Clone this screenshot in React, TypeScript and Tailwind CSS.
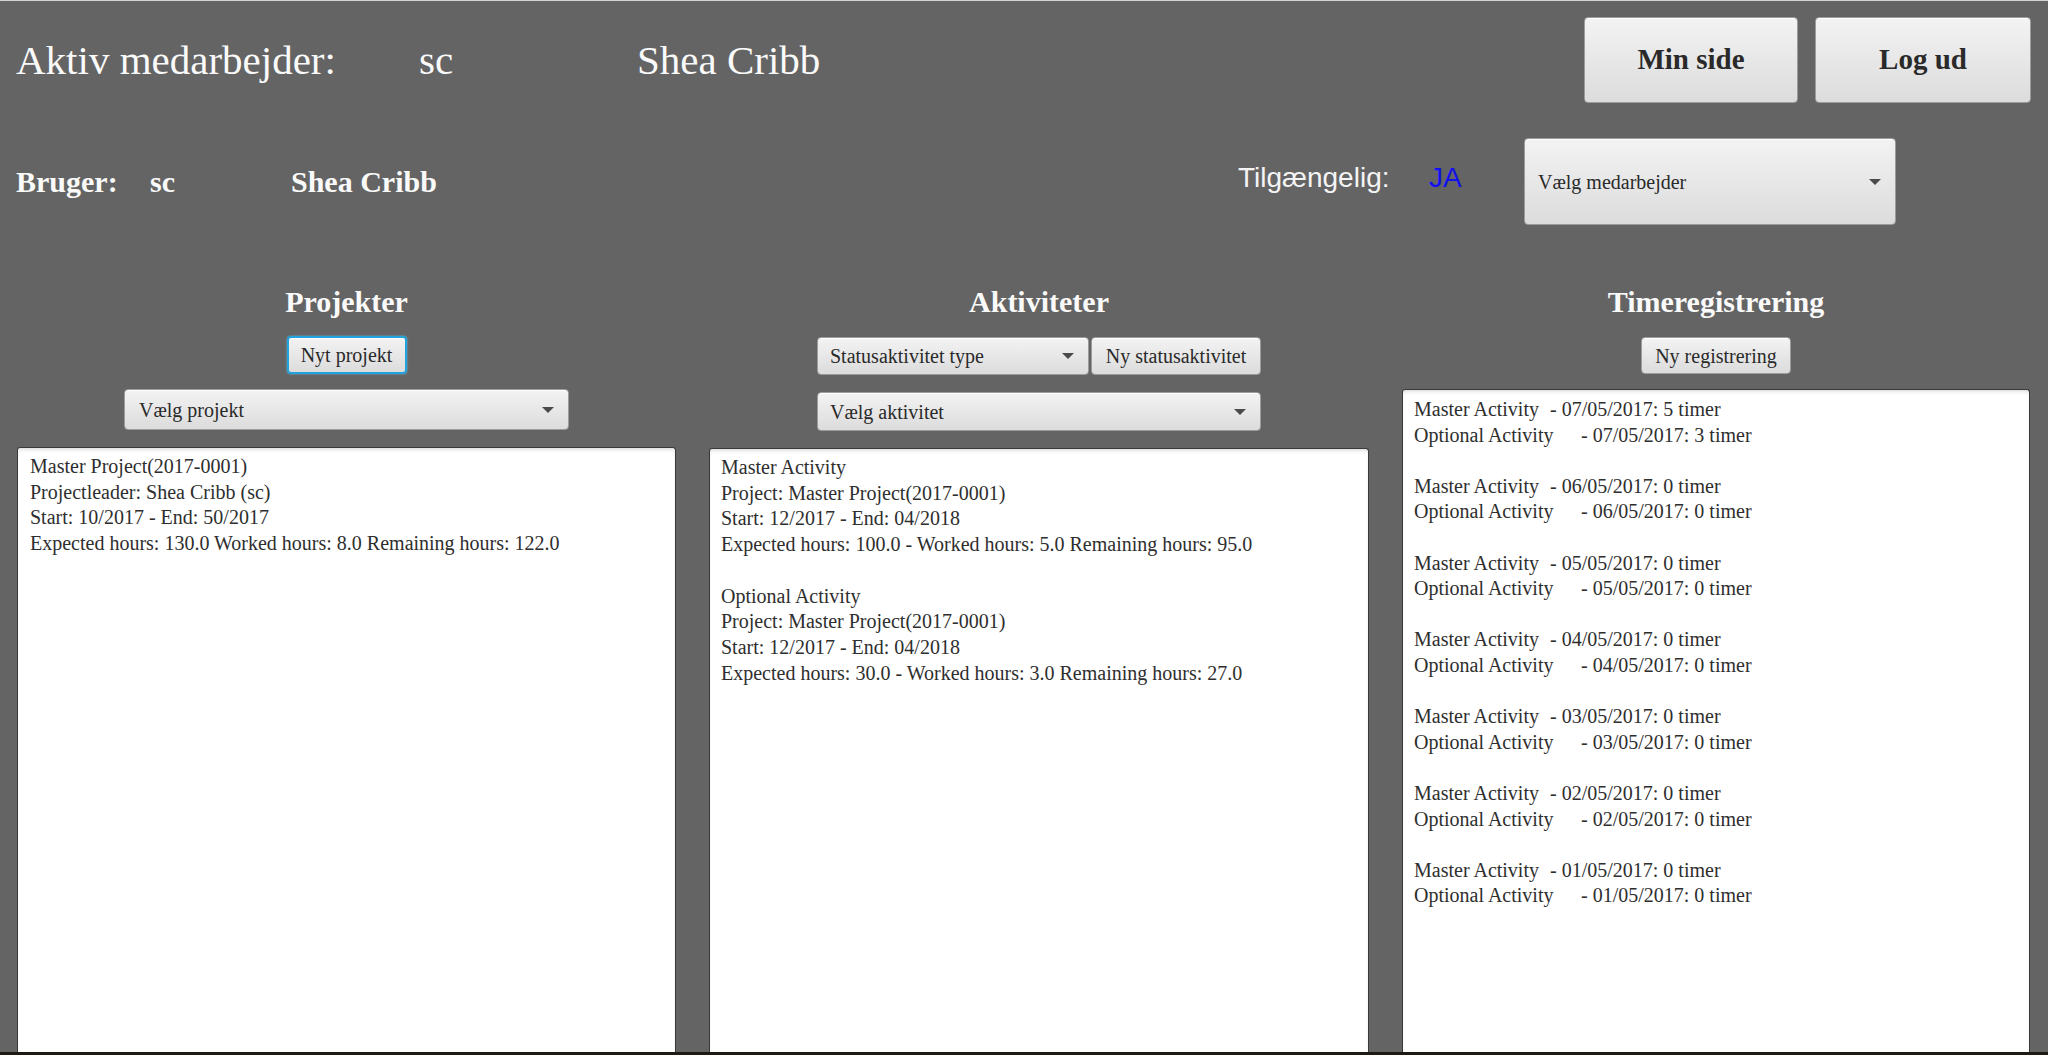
import type { ReactNode } from "react";

const serif = "font-['Liberation_Serif',_'Times_New_Roman',_serif]";

function Caret() {
  return (
    <svg width="12" height="6" viewBox="0 0 12 6" className="shrink-0">
      <path d="M0 0h12L6 6z" fill="#4a4a4a" />
    </svg>
  );
}

function Combo({ label, className }: { label: string; className: string }) {
  return (
    <div
      className={`flex items-center justify-between rounded-[4px] border border-[#9c9c9c] bg-gradient-to-b from-[#f3f3f3] to-[#dcdcdc] shadow-[inset_0_1px_0_#ffffff] text-[20px] text-[#2a2a2a] ${className}`}
    >
      <span>{label}</span>
      <Caret />
    </div>
  );
}

function Btn({ children, className }: { children: ReactNode; className: string }) {
  return (
    <div
      className={`flex items-center justify-center rounded-[4px] border bg-gradient-to-b from-[#f3f3f3] to-[#dcdcdc] text-[#2a2a2a] ${className}`}
    >
      {children}
    </div>
  );
}

function Panel({ children, className }: { children: ReactNode; className: string }) {
  return (
    <div
      className={`flex-1 rounded-t-[3px] border border-b-0 border-[#3a3a3a] bg-white shadow-[inset_0_3px_4px_-2px_rgba(0,0,0,0.18)] text-[20px] text-[#2e2e2e] ${className}`}
    >
      {children}
    </div>
  );
}

const days = ["07", "06", "05", "04", "03", "02", "01"];

export default function App() {
  return (
    <div
      className={`h-[1055px] w-[2048px] overflow-hidden bg-[#646464] border-t border-[#d4d4d4] flex flex-col ${serif}`}
    >
      {/* top row */}
      <div className="flex items-center h-[86px] mt-[16px] pl-[16px] pr-[17px]">
        <div className="flex-1 flex items-center text-[41px] text-[#fafafa] leading-[46px]">
          <span className="w-[403px]">Aktiv medarbejder:</span>
          <span className="w-[218px]">sc</span>
          <span>Shea Cribb</span>
        </div>
        <Btn className="w-[214px] h-[86px] text-[29px] font-bold border-[#9c9c9c] shadow-[inset_0_1px_0_#ffffff]">
          Min side
        </Btn>
        <Btn className="w-[216px] h-[86px] ml-[17px] text-[29px] font-bold border-[#9c9c9c] shadow-[inset_0_1px_0_#ffffff]">
          Log ud
        </Btn>
      </div>

      {/* second row */}
      <div className="flex items-center h-[87px] mt-[35px] pl-[16px] pr-[152px]">
        <div className="flex-1 flex items-center text-[30px] font-bold text-[#fafafa]">
          <span className="w-[134px]">Bruger:</span>
          <span className="w-[141px]">sc</span>
          <span>Shea Cribb</span>
        </div>
        <div className="flex items-center font-['Liberation_Sans',_Arial,_sans-serif] text-[28px] -mt-[7px]">
          <span className="w-[191px] text-[#f4f4f4]">Tilgængelig:</span>
          <span className="w-[95px] text-[#1010f0]">JA</span>
        </div>
        <Combo label="Vælg medarbejder" className="w-[372px] h-[87px] pl-[13px] pr-[14px]" />
      </div>

      {/* columns */}
      <div className="flex-1 min-h-0 grid grid-cols-[659px_660px_628px] gap-x-[33px] pl-[17px] pt-[57px]">
        <div className="flex flex-col items-center min-h-0">
          <h2 className="h-[40px] leading-[40px] text-[30px] font-bold text-[#fafafa]">Projekter</h2>
          <Btn className="mt-[14px] w-[120px] h-[38px] text-[20px] border-2 border-[#22a3de] shadow-[0_0_2px_#6cc4ee,inset_0_1px_0_#ffffff]">
            Nyt projekt
          </Btn>
          <Combo label="Vælg projekt" className="mt-[15px] w-[445px] h-[41px] pl-[14px] pr-[14px]" />
          <Panel className="mt-[17px] w-full pl-[12px] pt-[6px] leading-[25.7px]">
            <div>Master Project(2017-0001)</div>
            <div>Projectleader: Shea Cribb (sc)</div>
            <div>Start: 10/2017 - End: 50/2017</div>
            <div>Expected hours: 130.0 Worked hours: 8.0 Remaining hours: 122.0</div>
          </Panel>
        </div>

        <div className="flex flex-col items-center min-h-0">
          <h2 className="h-[40px] leading-[40px] text-[30px] font-bold text-[#fafafa]">Aktiviteter</h2>
          <div className="mt-[15px] flex gap-[2px]">
            <Combo label="Statusaktivitet type" className="w-[272px] h-[38px] pl-[12px] pr-[14px]" />
            <Btn className="w-[170px] h-[38px] text-[20px] border-[#9c9c9c] shadow-[inset_0_1px_0_#ffffff]">
              Ny statusaktivitet
            </Btn>
          </div>
          <Combo label="Vælg aktivitet" className="mt-[17px] w-[444px] h-[39px] pl-[12px] pr-[14px]" />
          <Panel className="mt-[17px] w-full pl-[11px] pt-[6px] leading-[25.7px]">
            <div>Master Activity</div>
            <div>Project: Master Project(2017-0001)</div>
            <div>Start: 12/2017 - End: 04/2018</div>
            <div>Expected hours: 100.0 - Worked hours: 5.0 Remaining hours: 95.0</div>
            <div className="h-[25.7px]" />
            <div>Optional Activity</div>
            <div>Project: Master Project(2017-0001)</div>
            <div>Start: 12/2017 - End: 04/2018</div>
            <div>Expected hours: 30.0 - Worked hours: 3.0 Remaining hours: 27.0</div>
          </Panel>
        </div>

        <div className="flex flex-col items-center min-h-0">
          <h2 className="h-[40px] leading-[40px] text-[30px] font-bold text-[#fafafa]">Timeregistrering</h2>
          <Btn className="mt-[15px] w-[150px] h-[37px] text-[20px] border-[#9c9c9c] shadow-[inset_0_1px_0_#ffffff]">
            Ny registrering
          </Btn>
          <Panel className="mt-[15px] w-full pl-[11px] pt-[7px] leading-[25.6px]">
            {days.map((d, i) => (
              <div key={d} className="mb-[25.6px]">
                <div className="flex">
                  <span className="w-[136px]">Master Activity</span>
                  <span>- {d}/05/2017: {i === 0 ? 5 : 0} timer</span>
                </div>
                <div className="flex">
                  <span className="w-[167px]">Optional Activity</span>
                  <span>- {d}/05/2017: {i === 0 ? 3 : 0} timer</span>
                </div>
              </div>
            ))}
          </Panel>
        </div>
      </div>
      <div className="h-[3px] bg-[#1c1a12]" />
    </div>
  );
}
